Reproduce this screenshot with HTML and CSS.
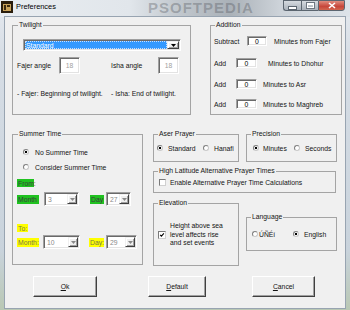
FILE: index.html
```html
<!DOCTYPE html>
<html lang="en">
<head>
    <meta charset="UTF-8">
    <meta name="viewport" content="width=device-width, initial-scale=1.0">
    <title>Preferences</title>
    <link rel="stylesheet" href="styles.css">
</head>
<body>
    <div class="window">
        <!-- Title bar -->
        <div class="titlebar">
            <svg class="app-icon" viewBox="0 0 12 12">
                <rect x="0" y="0" width="12" height="12" fill="#2a1d0c"/>
                <rect x="2" y="3" width="8" height="7" fill="#c9a25a"/>
                <rect x="3" y="4" width="2" height="5" fill="#3b2a10"/>
                <rect x="6" y="4" width="3" height="2" fill="#3b2a10"/>
            </svg>
            <span class="title">Preferences</span>
            <span class="wm-title">PSOFTPEDIA</span>
            <div class="controls">
                <div class="ctl ctl-min"><span class="glyph-min"></span></div>
                <div class="ctl ctl-max"><span class="glyph-max"></span></div>
                <div class="ctl ctl-close">
                    <svg viewBox="0 0 8 7" class="glyph-close">
                        <path d="M1 1 L7 6 M7 1 L1 6" stroke="#fff" stroke-width="1.6"/>
                    </svg>
                </div>
            </div>
        </div>

        <!-- Dialog body -->
        <div class="client">
            <div class="row-top">
                <fieldset class="group twilight">
                    <legend>Twilight</legend>
                    <div class="combo combo-wide">
                        <span class="combo-value"><span class="focus">Standard</span></span>
                        <span class="combo-btn"><svg viewBox="0 0 5 3"><polygon points="0,0 5,0 2.5,3" fill="#000"/></svg></span>
                    </div>
                    <div class="angles">
                        <span class="angle-label">Fajer angle</span>
                        <span class="box angle-box">18</span>
                        <span class="angle-label isha">Isha angle</span>
                        <span class="box angle-box">18</span>
                    </div>
                    <div class="notes">
                        <span class="note">- Fajer: Beginning of twilight.</span>
                        <span>- Isha: End of twilight.</span>
                    </div>
                </fieldset>

                <fieldset class="group addition">
                    <legend>Addition</legend>
                    <div class="add-row first">
                        <span class="add-label subtract">Subtract</span>
                        <span class="box add-box">0</span>
                        <span class="add-text gap-7">Minutes from Fajer</span>
                    </div>
                    <div class="add-row second">
                        <span class="add-label">Add</span>
                        <span class="box add-box">0</span>
                        <span class="add-text gap-11">Minutes to Dhohur</span>
                    </div>
                    <div class="add-row third">
                        <span class="add-label">Add</span>
                        <span class="box add-box">0</span>
                        <span class="add-text gap-6">Minutes to Asr</span>
                    </div>
                    <div class="add-row fourth">
                        <span class="add-label">Add</span>
                        <span class="box add-box">0</span>
                        <span class="add-text gap-6">Minutes to Maghreb</span>
                    </div>
                </fieldset>
            </div>

            <div class="row-mid">
                <fieldset class="group summer">
                    <legend>Summer Time</legend>
                    <div class="opt opt-first"><span class="radio on"></span><span class="opt-text">No Summer Time</span></div>
                    <div class="opt opt-second"><span class="radio"></span><span class="opt-text">Consider Summer Time</span></div>

                    <div class="tag green tag-from">From:</div>
                    <div class="date-row date-from">
                        <span class="tag green tag-month">Month</span>
                        <div class="combo combo-month">
                            <span class="combo-value off">3</span>
                            <span class="combo-btn off"><svg viewBox="0 0 5 3"><polygon points="0,0 5,0 2.5,3" fill="#8a8a8a"/></svg></span>
                        </div>
                        <span class="tag green tag-day">Day</span>
                        <div class="combo combo-day">
                            <span class="combo-value off">27</span>
                            <span class="combo-btn off"><svg viewBox="0 0 5 3"><polygon points="0,0 5,0 2.5,3" fill="#8a8a8a"/></svg></span>
                        </div>
                    </div>

                    <div class="tag yellow tag-to">To:</div>
                    <div class="date-row date-to">
                        <span class="tag yellow tag-month">Month:</span>
                        <div class="combo combo-month2">
                            <span class="combo-value off">10</span>
                            <span class="combo-btn off"><svg viewBox="0 0 5 3"><polygon points="0,0 5,0 2.5,3" fill="#8a8a8a"/></svg></span>
                        </div>
                        <span class="tag yellow tag-day2">Day:</span>
                        <div class="combo combo-day2">
                            <span class="combo-value off">29</span>
                            <span class="combo-btn off"><svg viewBox="0 0 5 3"><polygon points="0,0 5,0 2.5,3" fill="#8a8a8a"/></svg></span>
                        </div>
                    </div>
                </fieldset>

                <div class="side">
                    <fieldset class="group aser">
                        <legend>Aser Prayer</legend>
                        <div class="pair">
                            <span class="item item-standard"><span class="radio on"></span><span class="txt">Standard</span></span>
                            <span class="item"><span class="radio"></span><span class="txt">Hanafi</span></span>
                        </div>
                    </fieldset>

                    <fieldset class="group precision">
                        <legend>Precision</legend>
                        <div class="pair">
                            <span class="item item-minutes"><span class="radio on"></span><span class="txt">Minutes</span></span>
                            <span class="item"><span class="radio"></span><span class="txt wide">Seconds</span></span>
                        </div>
                    </fieldset>

                    <fieldset class="group latitude">
                        <legend>High Latitude Alternative Prayer Times</legend>
                        <div class="check-row">
                            <span class="check"></span>
                            <span class="check-text">Enable Alternative Prayer Time Calculations</span>
                        </div>
                    </fieldset>

                    <fieldset class="group elevation">
                        <legend>Elevation</legend>
                        <div class="elev-row">
                            <span class="check big">
                                <svg viewBox="0 0 8 8"><polyline points="1.5,3.8 3.2,5.6 6.5,1.8" fill="none" stroke="#000" stroke-width="1.4"/></svg>
                            </span>
                            <span class="elev-text">Height above sea<br>level affects rise<br>and set events</span>
                        </div>
                    </fieldset>

                    <fieldset class="group language">
                        <legend>Language</legend>
                        <div class="pair">
                            <span class="item item-lang"><span class="radio"></span><span class="txt tight">ÚÑÉí</span></span>
                            <span class="item"><span class="radio on"></span><span class="txt wide">English</span></span>
                        </div>
                    </fieldset>
                </div>
            </div>

            <div class="buttons">
                <div class="btn btn-ok"><span><u>O</u>k</span></div>
                <div class="btn btn-default"><span><u>D</u>efault</span></div>
                <div class="btn btn-cancel"><span><u>C</u>ancel</span></div>
            </div>
        </div>
    </div>
</body>
</html>
```

FILE: styles.css
```css
/* General styles */
* {
    box-sizing: border-box;
}

body {
    margin: 0;
    width: 350px;
    height: 310px;
    overflow: hidden;
    font-family: "Liberation Sans", Arial, sans-serif;
    font-size: 6.8px;
    color: #141414;
    background-color: #8fa57c;
}

/* Window frame */
.window {
    position: relative;
    width: 350px;
    height: 310px;
    overflow: hidden;
    background: linear-gradient(to bottom, #e6eaef 0, #d6dde5 60px, #c9d3dc 250px, #b9c8b4 100%);
}

.titlebar {
    position: relative;
    height: 17px;
    display: flex;
    align-items: flex-start;
    padding: 1px 0 0 1px;
    background: linear-gradient(to right, #e9edf1 0, #e1e6eb 130px, #c3c9cf 175px, #aab1b8 230px, #cdd3d9 280px, #dde3e9 100%);
}

.app-icon {
    width: 12px;
    height: 12px;
    flex-shrink: 0;
}

.title {
    margin-left: 3px;
    font-size: 7.4px;
    line-height: 12px;
    color: #000;
}

.wm-title {
    position: absolute;
    left: 148px;
    top: 0;
    font-size: 15px;
    line-height: 15px;
    font-weight: bold;
    letter-spacing: 1px;
    color: rgba(70, 74, 80, 0.32);
    white-space: nowrap;
}

.controls {
    position: relative;
    margin-left: auto;
    margin-right: 5px;
    margin-top: -1px;
    display: flex;
}

.ctl {
    height: 11px;
    border: 1px solid #5c6670;
    display: flex;
    align-items: center;
    justify-content: center;
}

.ctl-min {
    width: 18px;
    border-right: none;
    border-radius: 0 0 0 3px;
    background: linear-gradient(#d6dbe0, #a9b1ba);
}

.ctl-max {
    width: 17px;
    border-right: none;
    background: linear-gradient(#d6dbe0, #a9b1ba);
}

.ctl-close {
    width: 27px;
    border-radius: 0 0 3px 0;
    background: linear-gradient(#e08d7f, #c6463a 60%, #d2664f);
}

.glyph-min {
    width: 7px;
    height: 2px;
    margin-top: 4px;
    background: #fff;
    box-shadow: 0 0 0 1px #5c6670;
}

.glyph-max {
    width: 7px;
    height: 5px;
    border: 1px solid #fff;
    border-top-width: 2px;
    box-shadow: 0 0 0 1px #6d7680;
}

.glyph-close {
    width: 8px;
    height: 7px;
}

/* Client area */
.client {
    position: relative;
    margin-left: 5px;
    width: 340px;
    height: 291px;
    padding: 4px 0 0 7px;
    background-color: #f0f0f0;
    box-shadow: 0 0 0 1px #98a4b1;
}

/* Group boxes */
.group {
    margin: 0;
    padding: 0 0 0 4px;
    border: 1px solid #a4a4a4;
    min-width: 0;
}

.group legend {
    margin-left: 1px;
    padding: 0 1px;
    height: 8px;
    line-height: 8px;
    white-space: nowrap;
}

.row-top {
    display: flex;
    align-items: flex-start;
}

.twilight {
    width: 179px;
    height: 94px;
}

.addition {
    width: 132px;
    height: 94px;
    margin-left: 19px;
    padding-left: 3px;
}

/* Sunken boxes */
.box {
    display: flex;
    align-items: center;
    justify-content: center;
    background-color: #fff;
    border: 1px solid;
    border-color: #a0a0a0 #fff #fff #a0a0a0;
    box-shadow: inset 1px 1px #696969, inset -1px -1px #e3e3e3;
}

/* Combo boxes */
.combo {
    display: flex;
    background-color: #fff;
    border: 1px solid;
    border-color: #a0a0a0 #fff #fff #a0a0a0;
    box-shadow: inset 1px 1px #696969, inset -1px -1px #e3e3e3;
    padding: 1px;
}

.combo-value {
    flex: 1;
    display: flex;
    align-items: center;
    padding-left: 1px;
}

.combo-value.off {
    color: #8a8a8a;
    padding-left: 2px;
}

.combo-wide {
    width: 158px;
    height: 12px;
    margin: 10px 0 0 6px;
}

.combo-wide .combo-value {
    background-color: #3399ff;
    color: #fff;
    padding: 0;
}

.focus {
    display: flex;
    align-items: center;
    width: 100%;
    height: 100%;
    padding-left: 1px;
    outline: 1px dotted #c8e0ff;
    outline-offset: -1px;
}

.combo-btn {
    width: 12px;
    display: flex;
    align-items: center;
    justify-content: center;
    background-color: #f0f0f0;
    border: 1px solid;
    border-color: #f0f0f0 #404040 #404040 #f0f0f0;
    box-shadow: inset 1px 1px #fff, inset -1px -1px #a0a0a0;
}

.combo-btn svg {
    width: 5px;
    height: 3px;
}

.combo-btn.off {
    width: 10px;
}

/* Twilight rows */
.angles {
    display: flex;
    align-items: center;
    height: 17px;
    margin-top: 6px;
}

.angle-label {
    width: 42px;
}

.angle-label.isha {
    width: 47px;
    margin-left: 31px;
}

.angle-box {
    width: 21px;
    height: 17px;
    color: #a0a0a0;
}

.notes {
    display: flex;
    height: 8px;
    line-height: 8px;
    margin-top: 16px;
    white-space: nowrap;
}

.note {
    width: 94px;
}

/* Addition rows */
.add-row {
    display: flex;
    align-items: center;
    height: 10px;
    white-space: nowrap;
}

.add-row.first { margin-top: 7px; }
.add-row.second { margin-top: 12px; }
.add-row.third { margin-top: 11px; }
.add-row.fourth { margin-top: 10px; }

.add-label {
    width: 22px;
}

.add-label.subtract {
    width: 33px;
}

.add-box {
    width: 21px;
    height: 10px;
    color: #000;
}

.first .add-box {
    width: 20px;
}

.gap-7 { margin-left: 7px; }
.gap-11 { margin-left: 11px; }
.gap-6 { margin-left: 6px; }

/* Middle row */
.row-mid {
    display: flex;
    align-items: flex-start;
    margin-top: 15px;
}

.summer {
    width: 131px;
    height: 135px;
}

.side {
    margin-left: 10px;
    display: grid;
    grid-template-columns: 86px 91px;
    column-gap: 7px;
    align-items: start;
}

/* Radio buttons and check boxes */
.radio {
    flex-shrink: 0;
    width: 6px;
    height: 6px;
    border-radius: 50%;
    border: 1px solid #808080;
    border-right-color: #c8c8c8;
    border-bottom-color: #c8c8c8;
    background-color: #fff;
}

.radio.on {
    background: radial-gradient(circle, #000 0 1.1px, #fff 1.6px);
}

.check {
    flex-shrink: 0;
    width: 7px;
    height: 7px;
    background-color: #fff;
    border: 1px solid #7a7a7a;
    border-right-color: #d0d0d0;
    border-bottom-color: #d0d0d0;
    display: flex;
}

.check.big {
    width: 8px;
    height: 8px;
}

.check svg {
    width: 100%;
    height: 100%;
}

/* Summer time */
.opt {
    display: flex;
    align-items: center;
    height: 8px;
    padding-left: 6px;
    white-space: nowrap;
}

.opt-first { margin-top: 10px; }
.opt-second { margin-top: 7px; }

.opt-text {
    margin-left: 6px;
}

.tag {
    display: flex;
    align-items: center;
    height: 9px;
    padding-left: 1px;
    white-space: nowrap;
}

.green {
    background-color: #20c220;
    color: #3b3b3b;
}

.yellow {
    background-color: #ffff00;
    color: #77774a;
}

.tag-from {
    width: 17px;
    height: 8px;
    margin-top: 8px;
}

.tag-to {
    width: 11px;
    height: 8px;
    margin-top: 18px;
}

.date-row {
    display: flex;
    align-items: center;
    height: 14px;
}

.date-from { margin-top: 5px; }
.date-to { margin-top: 3px; }

.tag-month {
    width: 22px;
}

.combo-month {
    width: 35px;
    height: 14px;
    margin-left: 5px;
}

.tag-day {
    width: 14px;
    margin-left: 11px;
}

.combo-day {
    width: 25px;
    height: 14px;
    margin-left: 2px;
}

.combo-month2 {
    width: 37px;
    height: 14px;
    margin-left: 4px;
}

.tag-day2 {
    width: 15px;
    margin-left: 9px;
}

.combo-day2 {
    width: 31px;
    height: 14px;
    margin-left: 2px;
}

/* Right side groups */
.aser,
.precision {
    height: 32px;
    padding-left: 3px;
}

.pair {
    display: flex;
    align-items: center;
    height: 8px;
    margin-top: 6px;
    white-space: nowrap;
}

.item {
    display: flex;
    align-items: center;
}

.item-standard { width: 46px; }

.precision .pair,
.language .pair {
    padding-left: 3px;
}

.item-minutes { width: 41px; }

.txt {
    margin-left: 5px;
}

.precision .item-minutes .txt {
    margin-left: 4px;
}

.latitude {
    grid-column: 1 / 3;
    width: 183px;
    height: 26px;
    margin-top: 5px;
    padding-left: 3px;
}

.check-row {
    display: flex;
    align-items: center;
    height: 9px;
    margin-top: 3px;
    padding-left: 2px;
    white-space: nowrap;
}

.check-text {
    margin-left: 4px;
}

.elevation {
    height: 67px;
    margin-top: 6px;
    padding-left: 3px;
}

.elev-row {
    display: flex;
    align-items: center;
    margin-top: 15px;
    padding-left: 1px;
}

.elev-text {
    margin-left: 4px;
    line-height: 8.5px;
    white-space: nowrap;
}

.language {
    height: 38px;
    margin-top: 20px;
    padding-left: 3px;
}

.language .pair {
    margin-top: 9px;
    padding-left: 2px;
}

.item-lang { width: 41px; }

.txt.tight { margin-left: 1px; }

/* Buttons */
.buttons {
    display: flex;
    margin-top: 10px;
    margin-left: 21px;
}

.btn {
    height: 21px;
    display: flex;
    align-items: center;
    justify-content: center;
    background-color: #f0f0f0;
    border: 1px solid;
    border-color: #fff #404040 #404040 #fff;
    box-shadow: inset -1px -1px #a0a0a0;
}

.btn-ok { width: 64px; }
.btn-default { width: 58px; margin-left: 51px; }
.btn-cancel { width: 63px; margin-left: 46px; }
```
